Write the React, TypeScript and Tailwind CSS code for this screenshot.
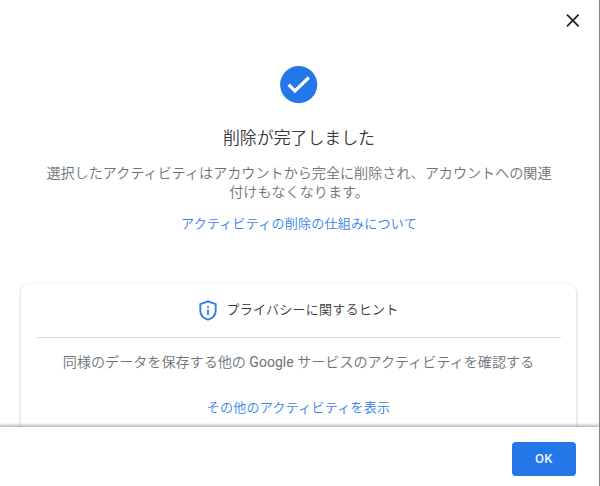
import React from 'react';

function CloseIcon() {
  return (
    <svg width="14" height="14" viewBox="0 0 14 14" fill="none" stroke="#202124" strokeWidth="1.8">
      <path d="M1 .7l11.6 11.6M12.6 .7L1 12.3" />
    </svg>
  );
}

function CheckBadge() {
  return (
    <svg width="38" height="38" viewBox="0 0 38 38" fill="none">
      <circle cx="18.7" cy="18.6" r="18.6" fill="#2377e8" />
      <path d="M8.6 18.7l6.3 6.3L28.9 11.5" stroke="#fff" strokeWidth="3.2" />
    </svg>
  );
}

function ShieldInfoIcon() {
  return (
    <svg width="18" height="21" viewBox="0 0 18 21" fill="none">
      <path d="M9 1.3L16.7 4.1V10.2C16.7 15 13.4 18.3 9 19.7C4.6 18.3 1.3 15 1.3 10.2V4.1Z" stroke="#2f7fea" strokeWidth="1.9" strokeLinejoin="round" />
      <path d="M9 9.2V14.9M9 5.9V7.7" stroke="#2f7fea" strokeWidth="1.8" />
    </svg>
  );
}

export default function App() {
  return (
    <div className="flex h-[486px] w-[600px] flex-col overflow-hidden border-r border-[#858585] bg-white font-[Roboto,'Noto_Sans_CJK_JP',sans-serif]">
      <main className="flex h-[427px] shrink-0 flex-col overflow-hidden">
        <div className="flex h-[66px] shrink-0 items-start justify-end pt-[14px] pr-[19px]">
          <button aria-label="閉じる"><CloseIcon /></button>
        </div>
        <section className="flex h-[218px] shrink-0 flex-col items-center pr-px text-center">
          <CheckBadge />
          <h1 className="mt-[22px] h-6 text-[16.9px] leading-6 font-[350] text-[#35383c]">削除が完了しました</h1>
          <p className="mt-[14px] text-[14.1px] leading-[19px] font-[350] whitespace-nowrap text-[#6e7276]">
            選択したアクティビティはアカウントから完全に削除され、アカウントへの関連
            <br />
            付けもなくなります。
          </p>
          <a className="mt-3 text-[13px] leading-5 font-[350] tracking-[0.25px] text-[#347fe8]">アクティビティの削除の仕組みについて</a>
        </section>
        <section className="mr-[23px] ml-[21px] flex h-[160px] shrink-0 flex-col rounded-t-lg px-[15px] shadow-[0_1px_3px_rgba(60,64,67,0.35)]">
          <div className="flex h-[54px] shrink-0 items-center justify-center gap-[10px] border-b border-[#dadce0]">
            <ShieldInfoIcon />
            <h2 className="-mt-px text-[13px] leading-5 font-[350] tracking-[0.25px] text-[#35383c]">プライバシーに関するヒント</h2>
          </div>
          <p className="mt-[14px] text-center text-[14.08px] leading-5 font-[350] whitespace-nowrap text-[#6e7276]">同様のデータを保存する他の <span className="font-normal">Google</span> サービスのアクティビティを確認する</p>
          <a className="mt-[26px] text-center text-[13px] leading-5 font-[350] tracking-[0.25px] text-[#347fe8]">その他のアクティビティを表示</a>
        </section>
      </main>
      <footer className="relative flex h-[59px] shrink-0 items-start justify-end bg-white pt-[15px] pr-[23px] shadow-[0_-1px_3px_1px_rgba(0,0,0,0.28)]">
        <button className="h-[34px] w-[64px] rounded-[4px] bg-[#2377e8] text-[13px] font-medium tracking-[0.3px] text-[#f0f6fe]">OK</button>
      </footer>
    </div>
  );
}
